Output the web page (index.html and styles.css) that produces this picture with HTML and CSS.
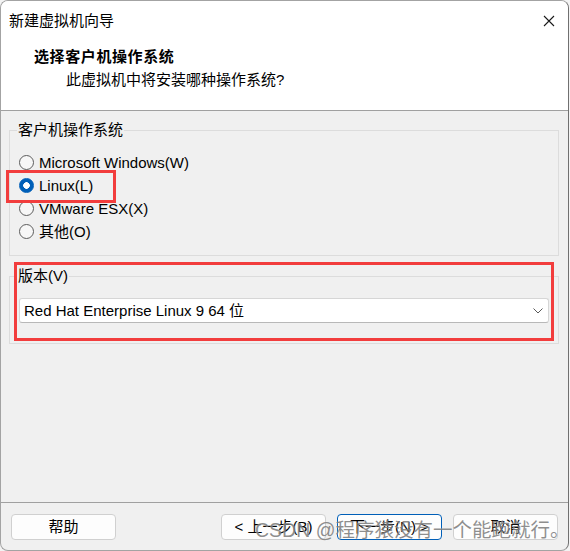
FILE: index.html
```html
<!DOCTYPE html>
<html lang="zh-CN">
<head>
<meta charset="utf-8">
<title>新建虚拟机向导</title>
<link rel="stylesheet" href="styles.css">
</head>
<body>
<div class="window">
  <header class="header">
    <div class="titlebar">
      <span class="title">新建虚拟机向导</span>
      <svg class="close" width="12" height="12" viewBox="0 0 12 12"><path d="M1 1L11 11M11 1L1 11" stroke="#1a1a1a" stroke-width="1.1" fill="none"/></svg>
    </div>
    <div class="heading">选择客户机操作系统</div>
    <div class="subheading">此虚拟机中将安装哪种操作系统?</div>
  </header>
  <main class="content">
    <fieldset class="group os-group">
      <legend class="legend">客户机操作系统</legend>
      <div class="radio"><span class="dot"></span><span>Microsoft Windows(W)</span></div>
      <div class="radio"><span class="dot dot-on"></span><span>Linux(L)</span></div>
      <div class="radio"><span class="dot"></span><span>VMware ESX(X)</span></div>
      <div class="radio"><span class="dot"></span><span>其他(O)</span></div>
    </fieldset>
    <fieldset class="group version-group">
      <legend class="legend">版本(V)</legend>
      <div class="select">
        <span>Red Hat Enterprise Linux 9 64 位</span>
        <svg class="chevron" width="10" height="6" viewBox="0 0 10 6"><path d="M0.5 0.5L5 5L9.5 0.5" stroke="#5a5a5a" stroke-width="1" fill="none"/></svg>
      </div>
    </fieldset>
  </main>
  <footer class="footer">
    <button class="btn">帮助</button>
    <button class="btn btn-back">&lt; 上一步(B)</button>
    <button class="btn btn-primary">下一步(N) &gt;</button>
    <button class="btn">取消</button>
  </footer>
  <div class="mark mark-linux"></div>
  <div class="mark mark-version"></div>
  <div class="watermark">CSDN @程序猿没有一个能跑就行。</div>
</div>
</body>
</html>
```

FILE: styles.css
```css
* { box-sizing: border-box; }
html, body { margin: 0; padding: 0; }
body {
  background: #f3f3f3;
  font-family: "Liberation Sans", "Noto Sans CJK SC", sans-serif;
  font-size: 15px;
  color: #000;
}
.window {
  position: relative;
  width: 569px;
  height: 551px;
  border: 1px solid #a3a3a3;
  border-right-color: #707070;
  border-radius: 8px;
  background: #f0f0f0;
  display: flex;
  flex-direction: column;
  overflow: hidden;
}
.header {
  flex: none;
  height: 110px;
  background: #fff;
  border-bottom: 1px solid #a0a0a0;
  padding-top: 10px;
}
.titlebar {
  display: flex;
  justify-content: space-between;
  align-items: center;
  height: 20px;
  line-height: 20px;
  padding: 0 13px 0 8px;
}
.close { display: block; }
.heading {
  margin-top: 16px;
  padding-left: 33px;
  font-weight: bold;
  line-height: 20px;
  letter-spacing: 0.6px;
}
.subheading {
  margin-top: 3px;
  padding-left: 65px;
  line-height: 20px;
}
.content {
  flex: 1;
  padding: 9px 9px 0 8px;
}
.group {
  margin: 0;
  min-width: 0;
  border: 1px solid #dcdcdc;
  padding: 11px 9px 12px 9px;
}
.legend {
  padding: 0 1px;
  margin-left: -2px;
  line-height: 20px;
}
.radio {
  display: flex;
  align-items: center;
  height: 23px;
  gap: 5px;
  line-height: 20px;
}
.dot {
  flex: none;
  width: 15px;
  height: 15px;
  border-radius: 50%;
  border: 1px solid #5c5c5c;
  background: #f7f7f7;
}
.dot-on {
  border-color: #005fb8;
  background: radial-gradient(circle, #fff 0 3px, #005fb8 3.6px);
}
.version-group {
  margin-top: 10px;
  padding-top: 12px;
  padding-bottom: 20px;
}
.select {
  height: 25px;
  background: #fff;
  border: 1px solid #d6d6d6;
  border-bottom-color: #b8b8b8;
  border-radius: 3px;
  display: flex;
  align-items: center;
  justify-content: space-between;
  padding: 0 5px 0 4px;
  line-height: 20px;
}
.chevron { display: block; }
.footer {
  flex: none;
  height: 48px;
  border-top: 1px solid #a0a0a0;
  padding: 11px 10px 0 10px;
  display: flex;
  gap: 11px;
}
.btn {
  width: 105px;
  height: 26px;
  padding: 0;
  border: 1px solid #d0d0d0;
  border-radius: 4px;
  background: #fdfdfd;
  font: inherit;
  color: #000;
  line-height: 20px;
}
.btn-back { margin-left: auto; }
.btn-primary { border-color: #005fb8; }
.mark {
  position: absolute;
  border: 3px solid #f23d3d;
}
.mark-linux { left: 5px; top: 169px; width: 110px; height: 33px; }
.mark-version { left: 13px; top: 261px; width: 540px; height: 79px; }
.watermark {
  position: absolute;
  left: 254px;
  top: 518px;
  font-size: 19.5px;
  line-height: 22px;
  color: rgba(105, 105, 105, 0.75);
  text-shadow: 0 0 1px rgba(255, 255, 255, 0.6);
  white-space: nowrap;
}
```
